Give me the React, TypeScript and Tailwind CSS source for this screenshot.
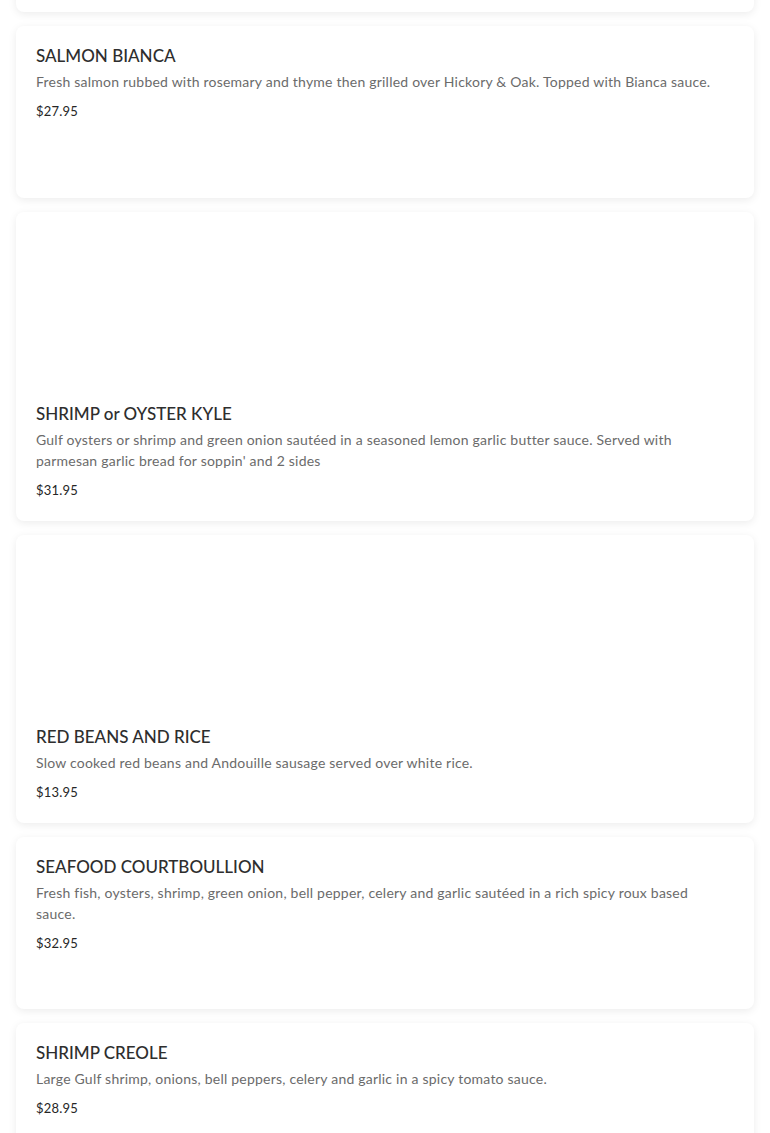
const items = [
  {
    name: "SALMON BIANCA",
    desc: "Fresh salmon rubbed with rosemary and thyme then grilled over Hickory & Oak. Topped with Bianca sauce.",
    price: "$27.95",
    image: false,
  },
  {
    name: "SHRIMP or OYSTER KYLE",
    desc: "Gulf oysters or shrimp and green onion sautéed in a seasoned lemon garlic butter sauce. Served with parmesan garlic bread for soppin' and 2 sides",
    price: "$31.95",
    image: true,
  },
  {
    name: "RED BEANS AND RICE",
    desc: "Slow cooked red beans and Andouille sausage served over white rice.",
    price: "$13.95",
    image: true,
  },
  {
    name: "SEAFOOD COURTBOULLION",
    desc: "Fresh fish, oysters, shrimp, green onion, bell pepper, celery and garlic sautéed in a rich spicy roux based sauce.",
    price: "$32.95",
    image: false,
  },
  {
    name: "SHRIMP CREOLE",
    desc: "Large Gulf shrimp, onions, bell peppers, celery and garlic in a spicy tomato sauce.",
    price: "$28.95",
    image: false,
  },
];

function MenuCard({ item }: { item: (typeof items)[number] }) {
  return (
    <div className="bg-white rounded-lg shadow-[0_2px_8px_rgba(0,0,0,0.08)] min-h-[172px] flex flex-col">
      {/* image slot, empty in the shot */}
      {item.image && <div className="h-[172px]" />}
      <div className="pl-5 pr-7 pt-5 pb-[22px]">
        <h3 className="text-[17px] leading-[20px] font-medium text-[#2e2e2e]">{item.name}</h3>
        <p className="mt-[5px] text-[14px] leading-[21px] text-[#6b6b6b] tracking-[0.22px]">{item.desc}</p>
        <p className="mt-[10px] text-[13px] leading-[18px] text-[#262626] tracking-[0.2px]">{item.price}</p>
      </div>
    </div>
  );
}

export default function App() {
  return (
    <div className="min-h-screen bg-white px-4 pb-6 overflow-hidden font-['Lato','Liberation_Sans',sans-serif]">
      <div className="flex flex-col gap-[14px]">
        <div className="bg-white rounded-lg shadow-[0_2px_8px_rgba(0,0,0,0.08)] h-[172px] -mt-[160px]" />
        {items.map((item) => (
          <MenuCard key={item.name} item={item} />
        ))}
      </div>
    </div>
  );
}
